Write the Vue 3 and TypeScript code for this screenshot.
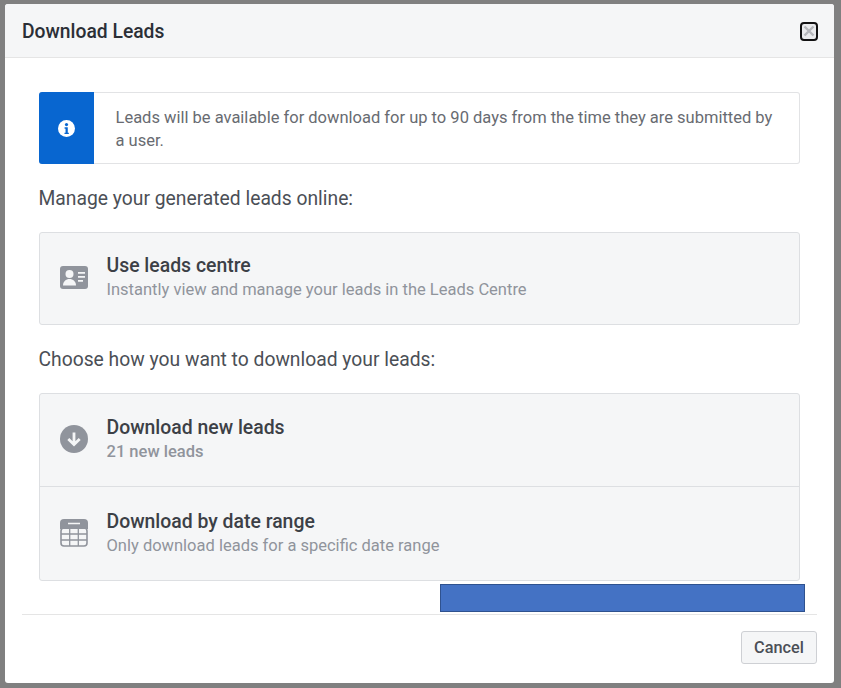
<script setup lang="ts">
interface Row { key: string; title: string; sub: string; strong?: boolean }
const centre: Row[] = [{ key: 'card', title: 'Use leads centre', sub: 'Instantly view and manage your leads in the Leads Centre' }]
const downloads: Row[] = [
  { key: 'down', title: 'Download new leads', sub: '21 new leads', strong: true },
  { key: 'table', title: 'Download by date range', sub: 'Only download leads for a specific date range' },
]
const groups = [
  { label: 'Manage your generated leads online:', rows: centre },
  { label: 'Choose how you want to download your leads:', rows: downloads },
]
</script>

<template>
  <div class="page">
    <div class="modal">
      <header class="head">
        <h1 class="title">Download Leads</h1>
        <button class="close" aria-label="Close">
          <svg width="12" height="12" viewBox="0 0 12 12"><path d="M1.5 1.5l9 9M10.5 1.5l-9 9" stroke="#b4b6ba" stroke-width="2.4" fill="none" /></svg>
        </button>
      </header>
      <main class="body">
        <div class="notice">
          <div class="notice-icon">
            <svg width="17" height="17" viewBox="0 0 16 16">
              <circle cx="8" cy="8" r="8" fill="#fff" />
              <circle cx="8" cy="4.3" r="1.5" fill="#0866d0" />
              <path d="M6.2 6.9h3v5h1v1.3H6.1v-1.3h1v-3.7h-.9z" fill="#0866d0" />
            </svg>
          </div>
          <p class="notice-text">Leads will be available for download for up to 90 days from the time they are submitted by a user.</p>
        </div>
        <section v-for="g in groups" :key="g.label" class="group">
          <h2 class="label">{{ g.label }}</h2>
          <div class="list">
            <div v-for="r in g.rows" :key="r.key" class="row">
              <svg v-if="r.key === 'card'" class="icon" width="28" height="23" viewBox="0 0 28 23">
                <rect width="28" height="23" rx="3" fill="#90949c" />
                <circle cx="9.5" cy="8" r="4" fill="#f5f6f7" />
                <path d="M3 19.5c0-4 3-6.5 6.5-6.5s6.5 2.500 6.500 6.500z" fill="#f5f6f7" />
                <path d="M18 6h7v1.800h-7zM18 10h7v1.800h-7zM18 14h5v1.800h-5z" fill="#f5f6f7" />
              </svg>
              <svg v-else-if="r.key === 'down'" class="icon" width="28" height="28" viewBox="0 0 28 28">
                <circle cx="14" cy="14" r="14" fill="#90949c" />
                <path d="M14 7.500v12M8.300 14l5.700 5.500 5.700-5.500" fill="none" stroke="#f5f6f7" stroke-width="2.800" />
              </svg>
              <svg v-else class="icon" width="28" height="28" viewBox="0 0 28 28">
                <path d="M4 0h20a4 4 0 0 1 4 4v6H0V4a4 4 0 0 1 4-4z" fill="#90949c" />
                <path d="M8 4.500h12" stroke="#f5f6f7" stroke-width="1.600" />
                <rect x="1" y="9" width="26" height="18" rx="3" fill="none" stroke="#90949c" stroke-width="1.600" />
                <path d="M9.700 9v18M18.300 9v18M1 15h26M1 21h26" stroke="#90949c" stroke-width="1.300" />
              </svg>
              <div class="copy">
                <div class="row-title">{{ r.title }}</div>
                <div class="row-sub" :class="{ strong: r.strong }">{{ r.sub }}</div>
              </div>
            </div>
          </div>
        </section>
      </main>
      <footer class="foot">
        <button class="cancel">Cancel</button>
      </footer>
      <div class="redaction"></div>
    </div>
  </div>
</template>

<style>
html, body { margin: 0; background: #808080; }
</style>

<style scoped>
.page {
  width: 841px;
  height: 688px;
  box-sizing: border-box;
  padding: 4px 7px 5px 5px;
  background: #808080;
  font-family: Roboto, "Liberation Sans", sans-serif;
}
.modal {
  position: relative;
  height: 100%;
  display: flex;
  flex-direction: column;
  background: #fff;
  border-radius: 3px;
  overflow: hidden;
}
.head {
  height: 53px;
  flex: none;
  display: flex;
  align-items: center;
  justify-content: space-between;
  padding: 0 16px 0 17px;
  background: #f5f6f7;
  border-bottom: 1px solid #e5e5e5;
}
.title {
  margin: 2px 0 0;
  font-size: 19.3px;
  font-weight: 500;
  color: #2b2f36;
}
.close {
  width: 18px;
  height: 19px;
  padding: 0;
  display: flex;
  align-items: center;
  justify-content: center;
  background: #e9eaec;
  border: 2px solid #111;
  border-radius: 4px;
  margin-top: 1px;
}
.body {
  flex: 1;
  padding: 34px 34px 0 33.5px;
}
.notice {
  height: 72px;
  box-sizing: border-box;
  display: flex;
  align-items: stretch;
  background: #fff;
  border: 1px solid #e2e3e5;
  border-left: 0;
  border-radius: 3px;
}
.notice-icon {
  width: 55px;
  flex: none;
  display: flex;
  align-items: center;
  justify-content: center;
  background: #0866d0;
  border-radius: 3px 0 0 3px;
  margin: -1px 0;
}
.notice-text {
  margin: 2px 0 0;
  align-self: center;
  padding: 0 22px;
  font-size: 16.5px;
  line-height: 23px;
  color: #686b71;
}
.group { margin-top: 21px; }
.label {
  margin: 0 0 20px;
  font-size: 19.3px;
  line-height: 27px;
  font-weight: 400;
  color: #4b4f56;
}
.list {
  background: #f5f6f7;
  border: 1px solid #dddfe2;
  border-radius: 3px;
}
.row {
  height: 91px;
  box-sizing: border-box;
  display: flex;
  align-items: center;
  padding: 0 0 2px 20px;
}
.group + .group .row { height: 92px; }
.group + .group .row + .row { border-top: 1px solid #dddfe2; height: 94px; }
.group + .group .copy { margin-top: 2px; }
.group + .group .row + .row .copy { margin-top: 3px; }
.icon { flex: none; }
.copy { margin-left: 19px; }
.row-title {
  font-size: 19.4px;
  line-height: 24px;
  font-weight: 500;
  color: #3c4046;
}
.row-sub {
  font-size: 16.5px;
  line-height: 24px;
  color: #90949c;
}
.row-sub.strong { font-weight: 500; }
.foot {
  flex: none;
  height: 69px;
  box-sizing: border-box;
  margin: 0 17px;
  display: flex;
  justify-content: flex-end;
  align-items: flex-start;
  padding-top: 16px;
  border-top: 1px solid #e5e5e5;
}
.cancel {
  width: 76px;
  height: 33px;
  padding: 0;
  background: #f5f6f7;
  border: 1px solid #ced0d4;
  border-radius: 3px;
  font-family: inherit;
  font-size: 16.3px;
  font-weight: 500;
  color: #4b4f56;
}
.redaction {
  position: absolute;
  left: 435px;
  top: 580px;
  width: 363px;
  height: 26px;
  background: #4472c4;
  border: 1px solid #2f528f;
}
</style>
